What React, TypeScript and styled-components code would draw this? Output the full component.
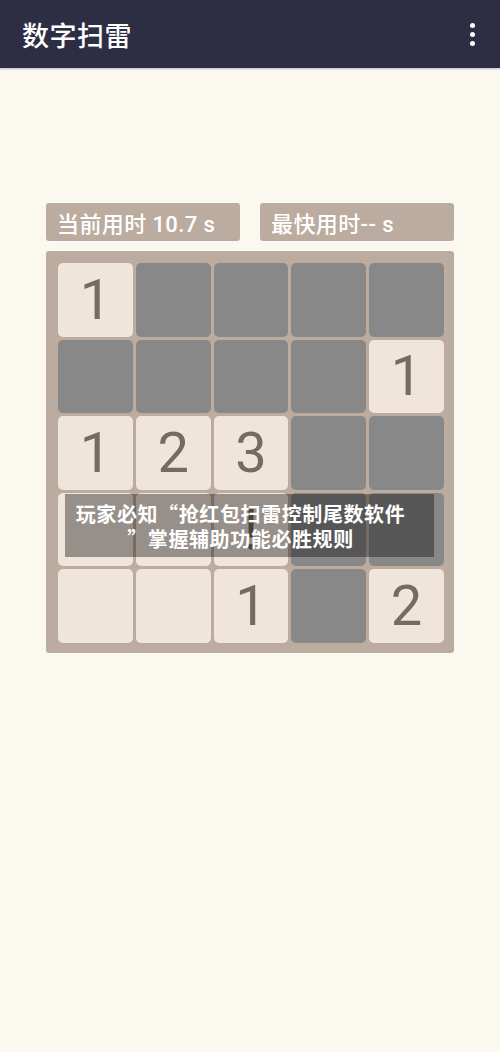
import React from 'react';
import styled, { createGlobalStyle } from 'styled-components';

const GlobalStyle = createGlobalStyle`
  html, body {
    margin: 0;
    padding: 0;
    background: #fbf8f0;
  }
  body {
    font-family: Roboto, "Noto Sans CJK SC", sans-serif;
  }
`;

const Page = styled.div`
  width: 500px;
  min-height: 1052px;
  background: #fbf8f0;
  display: flex;
  flex-direction: column;
`;

const AppBar = styled.header`
  height: 68px;
  background: #2d2e44;
  display: flex;
  align-items: center;
  justify-content: space-between;
  padding: 0 18px 0 22px;
  box-shadow: 0 1px 2px rgba(0, 0, 0, 0.25);
`;

const Title = styled.h1`
  margin: 0;
  color: #ffffff;
  font-size: 27px;
  font-weight: 500;
  letter-spacing: 0.5px;
  font-family: "Noto Sans CJK SC", sans-serif;
`;

const MenuButton = styled.div`
  display: flex;
  flex-direction: column;
  align-items: center;
  gap: 4px;
  width: 20px;
`;

const Dot = styled.span`
  width: 5px;
  height: 5px;
  border-radius: 50%;
  background: #ffffff;
`;

const Content = styled.main`
  display: flex;
  flex-direction: column;
  align-items: center;
  padding-top: 135px;
`;

const StatsRow = styled.div`
  width: 408px;
  display: flex;
  justify-content: space-between;
  margin-bottom: 10px;
`;

const StatBox = styled.div`
  width: 194px;
  height: 38px;
  box-sizing: border-box;
  background: #bcac9f;
  border-radius: 3px;
  color: #ffffff;
  font-size: 22px;
  letter-spacing: 0.4px;
  display: flex;
  align-items: center;
  padding-left: 11px;
  font-family: Roboto, "Noto Sans CJK SC", sans-serif;
  font-weight: 500;
`;

const BoardWrap = styled.div`
  position: relative;
`;

const Board = styled.div`
  width: 408px;
  box-sizing: border-box;
  background: #bcac9f;
  border-radius: 3px;
  padding: 12px 10px 10px 12px;
  display: grid;
  grid-template-columns: repeat(5, 1fr);
  grid-auto-rows: 73.6px;
  gap: 3px;
`;

const Cell = styled.div<{ $open: boolean }>`
  border-radius: 5px;
  background: ${({ $open }) => ($open ? '#efe5db' : '#888888')};
  color: #766b5f;
  font-family: Roboto, sans-serif;
  font-size: 56px;
  font-weight: 400;
  display: flex;
  align-items: center;
  justify-content: center;
`;

const Banner = styled.div`
  position: absolute;
  left: 19px;
  top: 243px;
  width: 369px;
  height: 63px;
  background: rgba(0, 0, 0, 0.37);
  display: flex;
  flex-direction: column;
  justify-content: center;
  align-items: center;
  padding-right: 18px;
  box-sizing: border-box;
`;

const BannerLine = styled.span`
  color: #ffffff;
  font-size: 20px;
  font-weight: 700;
  letter-spacing: 0.6px;
  line-height: 25px;
  font-family: "Noto Sans CJK SC", sans-serif;
  white-space: nowrap;
`;

// '' = closed, ' ' = opened empty, other = opened with its label
const grid: string[][] = [
  ['1', '', '', '', ''],
  ['', '', '', '', '1'],
  ['1', '2', '3', '', ''],
  [' ', ' ', '!', '', ''],
  [' ', ' ', '1', '', '2'],
];

const App: React.FC = () => {
  return (
    <Page>
      <GlobalStyle />
      <AppBar>
        <Title>数字扫雷</Title>
        <MenuButton>
          <Dot />
          <Dot />
          <Dot />
        </MenuButton>
      </AppBar>
      <Content>
        <StatsRow>
          <StatBox>当前用时 10.7 s</StatBox>
          <StatBox>最快用时-- s</StatBox>
        </StatsRow>
        <BoardWrap>
          <Board>
            {grid.map((row, r) =>
              row.map((v, c) => (
                <Cell key={`${r}-${c}`} $open={v !== ''}>
                  {v.trim()}
                </Cell>
              ))
            )}
          </Board>
          <Banner>
            <BannerLine>玩家必知“抢红包扫雷控制尾数软件</BannerLine>
            <BannerLine>”掌握辅助功能必胜规则</BannerLine>
          </Banner>
        </BoardWrap>
      </Content>
    </Page>
  );
};

export default App;
